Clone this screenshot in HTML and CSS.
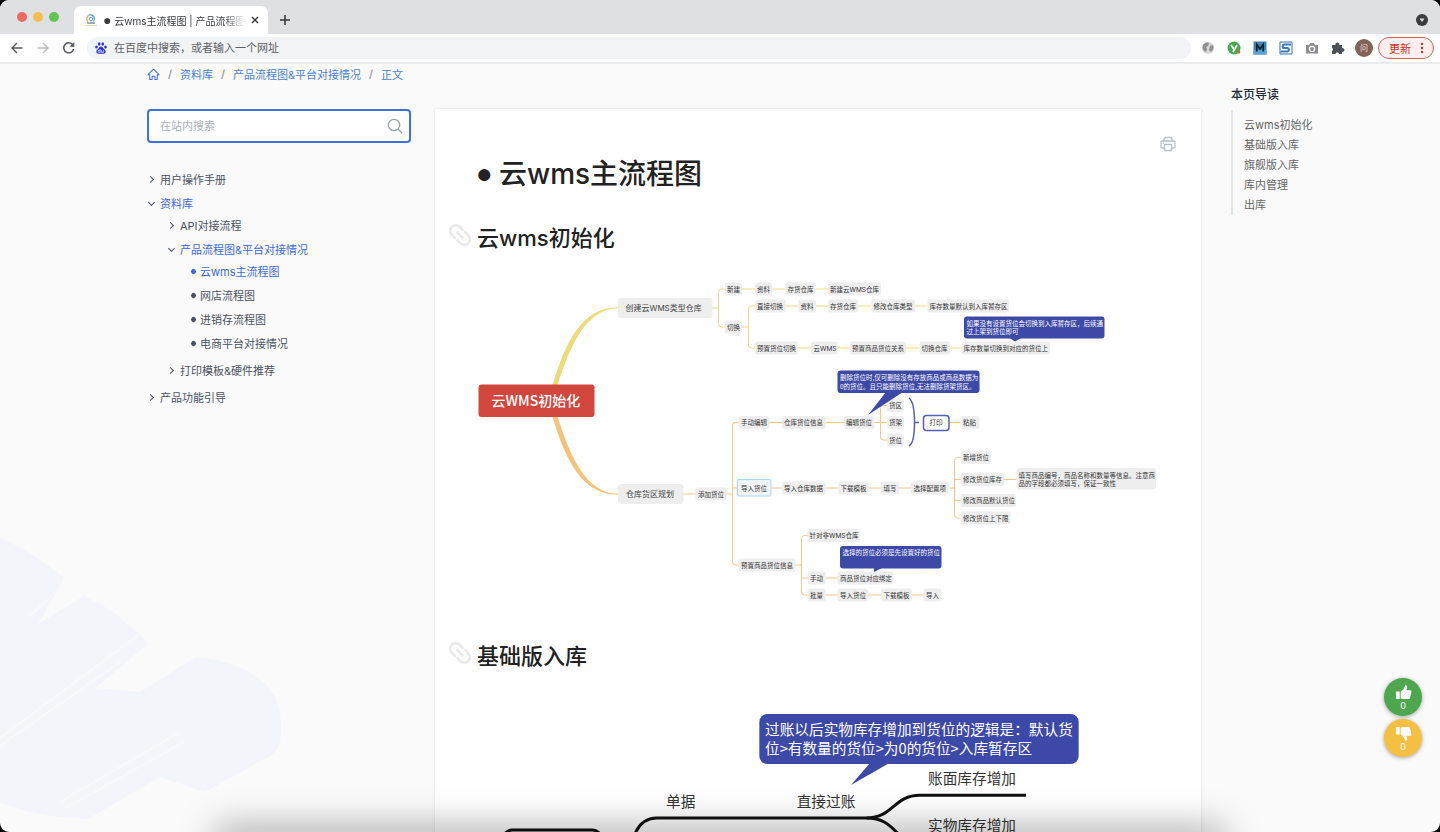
FILE: index.html
```
<!DOCTYPE html>
<html lang="zh-CN">
<head>
    <meta charset="UTF-8">
    <meta name="viewport" content="width=device-width, initial-scale=1.0">
    <title>● 云wms主流程图 | 产品流程图&amp;平台对接情况</title>
    <link rel="stylesheet" href="styles.css">
</head>
<body>
<div class="window">
    <header class="tab-bar">
        <div class="lights"><span class="light red"></span><span class="light yellow"></span><span class="light green"></span></div>
        <div class="tab">
            <svg class="favicon" viewBox="0 0 14 14" fill="none">
                <path d="M4 8.5A4 4 0 0 1 5 2.2" stroke="#e8b84a" stroke-width="1.4"/>
                <path d="M5 2.2A4 4 0 0 1 10.5 6" stroke="#5a9bd8" stroke-width="1.4"/>
                <path d="M10.5 6A3.8 3.8 0 0 1 9 8.5" stroke="#7cc47c" stroke-width="1.4"/>
                <circle cx="7" cy="6" r="1.8" stroke="#5a9bd8"/>
                <path d="M3 10h8" stroke="#7d8fa8" stroke-width="1.4"/>
                <path d="M1 12.500h12" stroke="#e5cfa0" stroke-width=".8"/>
            </svg>
            <span class="tab-title"><span class="dot">●</span> 云wms主流程图 | 产品流程图&amp;</span>
            <button class="icon-btn tab-close" aria-label="关闭"><svg viewBox="0 0 8 8"><path d="M1 1l6 6M7 1L1 7" stroke="#333" stroke-width="1.3"/></svg></button>
        </div>
        <button class="icon-btn tab-new" aria-label="新标签页"><svg viewBox="0 0 10 10"><path d="M5 0v10M0 5h10" stroke="#333" stroke-width="1.5"/></svg></button>
        <button class="icon-btn tab-menu" aria-label="搜索标签页"><svg viewBox="0 0 12 12"><circle cx="6" cy="6" r="6" fill="#3b3c40"/><path d="M3.500 4.500h5L6 8z" fill="#dee0e4"/></svg></button>
    </header>

    <div class="toolbar">
        <button class="icon-btn" aria-label="后退"><svg viewBox="0 0 16 16" fill="none" stroke="#55585d" stroke-width="1.4"><path d="M13.500 8H3M8 3L3 8l5 5"/></svg></button>
        <button class="icon-btn" aria-label="前进"><svg viewBox="0 0 16 16" fill="none" stroke="#bcbec2" stroke-width="1.4"><path d="M2.500 8H13M8 3l5 5-5 5"/></svg></button>
        <button class="icon-btn" aria-label="刷新"><svg viewBox="0 0 16 16" fill="none" stroke="#55585d" stroke-width="1.5"><path d="M12.600 9A5 5 0 1 1 11.500 4.500"/><path d="M13.300 2v4.800H8.500z" fill="#55585d" stroke="none"/></svg></button>
        <label class="omnibox">
            <svg viewBox="0 0 12 12" fill="#2b32d6">
                <ellipse cx="4.200" cy="2" rx="1.300" ry="1.800"/><ellipse cx="7.800" cy="2" rx="1.300" ry="1.800"/>
                <ellipse cx="1.500" cy="5" rx="1.300" ry="1.600"/><ellipse cx="10.500" cy="5" rx="1.300" ry="1.600"/>
                <path d="M6 4.500c1.600 0 2 1.600 3 2.600s2 1.600 1.600 3.200c-.4 1.700-2.300 1.500-4.600 1.500s-4.200.2-4.600-1.500C1 8.700 2 8 3 7.100s1.400-2.600 3-2.600z"/>
                <path d="M5.200 7v3.400H4a1 1 0 0 1 0-2h1.200M6.600 8.200v2.200h2V8.200" fill="none" stroke="#fff" stroke-width=".7"/>
            </svg>
            <input type="text" placeholder="在百度中搜索，或者输入一个网址">
        </label>
        <div class="extensions">
            <svg viewBox="0 0 14 14"><circle cx="7" cy="7" r="6" fill="#d5d5d5"/><path d="M2 4c2-3 5-3 6-2l-1 3-2 1 1 2-1 3C3 10 1 8 2 4zM9 5l3-1c1 3 0 5-2 7L8 9z" fill="#8f8f8f"/></svg>
            <svg viewBox="0 0 14 14"><circle cx="7" cy="7" r="6.500" fill="#3fae49"/><path d="M4 4l2.800 4M10 4L6 11" stroke="#fff" stroke-width="1.800" fill="none"/><circle cx="11.500" cy="11" r="1.800" fill="#e4574a"/></svg>
            <svg viewBox="0 0 14 14"><path d="M.5.5h13v13H.5z" fill="#3c86b8"/><path d="M.5 9h13v4.500H.5z" fill="#56a5d4"/><path d="M3.800 10.500v-7L7 8l3.200-4.500v7" fill="none" stroke="#10202c" stroke-width="1.700"/></svg>
            <svg viewBox="0 0 14 14"><path d="M1 1h12v12H1z" fill="#fff" stroke="#3e6ea8"/><path d="M12 3.500H5.500a1.700 1.700 0 0 0 0 3.500h3a1.800 1.800 0 0 1 0 3.500H1.500" fill="none" stroke="#3e78bd" stroke-width="2.200"/></svg>
            <svg viewBox="0 0 14 14"><path d="M1 4h3l1-2h4l1 2h3v8.500H1z" fill="#8b8d90"/><circle cx="7" cy="8" r="2.600" fill="#8b8d90" stroke="#fff" stroke-width="1.200"/></svg>
            <svg viewBox="0 0 14 14"><path d="M1 4h3.500a2 2 0 1 1 3.800 0H11v3.200a1.900 1.900 0 1 1 0 3.600V13H8a1.800 1.800 0 0 0-3.500 0H1v-3a1.800 1.800 0 0 0 0-3.300z" fill="#4d5055"/></svg>
        </div>
        <span class="avatar">问</span>
        <button class="update">更新 <svg viewBox="0 0 4 12" fill="#c5342c"><circle cx="2" cy="2" r="1.200"/><circle cx="2" cy="6" r="1.200"/><circle cx="2" cy="10" r="1.200"/></svg></button>
    </div>

    <div class="page">
        <svg class="brush" viewBox="0 0 290 300" aria-hidden="true">
            <path d="M0 6C25 16 45 30 64 46L38 92 84 64Q120 80 148 112L95 156 140 160 196 125Q285 135 281 200 282 215 270 224L205 260 160 245 88 287Q35 285 0 270z" fill="#f4f5fb"/>
            <path d="M0 206L140 102M0 214L120 130M60 270L180 200M66 276L184 210M30 84L66 50" stroke="#f8f8fb" stroke-width="2"/>
        </svg>

        <div class="content">
            <nav class="breadcrumb">
                <a href="#" aria-label="首页"><svg viewBox="0 0 14 14" fill="none" stroke="#4a6fe0" stroke-width="1.100" stroke-linejoin="round"><path d="M1 7.200L7 1.300l6 5.900h-2v5.300H8.500V8.800h-3v3.700H3V7.200z"/></svg></a>
                <span>/</span><a href="#">资料库</a>
                <span>/</span><a href="#">产品流程图&amp;平台对接情况</a>
                <span>/</span><a href="#">正文</a>
            </nav>
            <div class="columns">
                <aside class="sidebar">
                    <form class="search">
                        <input type="text" placeholder="在站内搜索" aria-label="在站内搜索">
                        <button type="button" class="icon-btn" aria-label="搜索"><svg viewBox="0 0 16 16" fill="none" stroke="#97a3b0" stroke-width="1.300"><circle cx="7" cy="7" r="5.700"/><path d="M11 11l4 4"/></svg></button>
                    </form>
                    <ul class="menu">
                        <li><a href="#" class="closed">用户操作手册</a></li>
                        <li><a href="#" class="open">资料库</a>
                            <ul>
                                <li><a href="#" class="closed">API对接流程</a></li>
                                <li><a href="#" class="open">产品流程图&amp;平台对接情况</a>
                                    <ul>
                                        <li><a href="#" class="leaf active">云wms主流程图</a></li>
                                        <li><a href="#" class="leaf">网店流程图</a></li>
                                        <li><a href="#" class="leaf">进销存流程图</a></li>
                                        <li><a href="#" class="leaf">电商平台对接情况</a></li>
                                    </ul>
                                </li>
                                <li><a href="#" class="closed">打印模板&amp;硬件推荐</a></li>
                            </ul>
                        </li>
                        <li><a href="#" class="closed">产品功能引导</a></li>
                    </ul>
                </aside>

                <article class="article">
                    <div class="actions">
                        <button class="icon-btn" aria-label="打印"><svg viewBox="0 0 16 16" fill="none" stroke="#b9bfcc" stroke-width="1.300" stroke-linejoin="round"><path d="M4 5V3a1.500 1.500 0 0 1 1.500-1.500h5A1.500 1.500 0 0 1 12 3v2M4 12H2.500A1.500 1.500 0 0 1 1 10.500v-4A1.500 1.500 0 0 1 2.500 5h11A1.500 1.500 0 0 1 15 6.500v4a1.500 1.500 0 0 1-1.500 1.500H12M4.500 8.500h7v6h-7zM3 7h1"/></svg></button>
                    </div>
                    <h1><span class="dot">●</span><span>云wms主流程图</span></h1>
                    <h2><svg class="anchor" viewBox="3 3 18 18"><path transform="rotate(45 12 12)" d="M10.500 7.500H7a4.500 4.500 0 0 0 0 9h3.500M13.500 7.500H17a4.500 4.500 0 0 1 0 9h-3.500M9 12h6"/></svg>云wms初始化</h2>

                    <svg class="map" viewBox="956 556 1396 660">
                        <!-- branches -->
                        <path fill="#ecdb7c" d="M1105 772C1132 684 1164 617 1236 616.500V618.500C1172 620 1142 690 1115 772z"/>
                        <path fill="#f6c17b" d="M1105 836C1132 924 1164 991 1236 991.500V989.500C1172 988 1142 918 1115 836z"/>
                        <g class="line yellow-line">
                            <path d="M1424 618H1437M1450 580H1443Q1437 580 1437 586V650Q1437 656 1443 656H1450"/>
                            <path d="M1484 580H1510M1544 580H1570M1630 580H1656"/>
                            <path d="M1484 656H1497M1510 614H1503Q1497 614 1497 620V692Q1497 698 1503 698H1510"/>
                            <path d="M1570 614H1597M1632 614H1656M1716 614H1742M1830 614H1855"/>
                            <path d="M1596 698H1622M1674 698H1700M1812 698H1838M1900 698H1923"/>
                        </g>
                        <g class="line orange-line">
                            <path d="M1366 990H1392M1452 990H1465M1478 847H1471Q1465 847 1465 853V1126Q1465 1132 1471 1132H1478M1465 978H1474"/>
                            <path d="M1538 847H1564M1650 847H1688M1748 847H1774M1774 813H1767Q1761 813 1761 819V876Q1761 882 1767 882H1774M1898 847H1922"/>
                            <path d="M1542 978H1564M1650 978H1678M1736 978H1762M1798 978H1822M1896 978H1909M1922 917H1915Q1909 917 1909 923V1032Q1909 1038 1915 1038H1922M1909 961H1922M1909 1003H1922M2008 961H2034"/>
                            <path d="M1590 1132H1603M1616 1073H1609Q1603 1073 1603 1079V1186Q1603 1192 1609 1192H1616M1603 1158H1616"/>
                            <path d="M1650 1158H1676M1650 1192H1676M1736 1192H1762M1824 1192H1848"/>
                        </g>
                        <path class="bracket" d="M1818 798Q1829 806 1829 847T1818 894M1829 847h9"/>

                        <!-- main topics -->
                        <rect x="957" y="771" width="232" height="65" rx="6" fill="#d1463d"/>
                        <text class="root" x="983" y="814">云WMS初始化</text>
                        <g class="topic">
                            <rect x="1236" y="598" width="189" height="40" rx="6"/><text x="1251" y="624">创建云WMS类型仓库</text>
                            <rect x="1236" y="970" width="131" height="40" rx="6"/><text x="1252" y="996">仓库货区规划</text>
                        </g>

                        <g class="node">
                            <rect x="1450" y="567" width="34"/><text x="1454" y="585">新建</text>
                            <rect x="1510" y="567" width="34"/><text x="1514" y="585">资料</text>
                            <rect x="1570" y="567" width="61"/><text x="1575" y="585">存货仓库</text>
                            <rect x="1656" y="567" width="106"/><text x="1660" y="585">新建云WMS仓库</text>
                            <rect x="1510" y="601" width="61"/><text x="1514" y="619">直接切换</text>
                            <rect x="1597" y="601" width="35"/><text x="1601" y="619">资料</text>
                            <rect x="1656" y="601" width="60"/><text x="1660" y="619">存货仓库</text>
                            <rect x="1743" y="601" width="87"/><text x="1747" y="619">修改仓库类型</text>
                            <rect x="1855" y="601" width="163"/><text x="1859" y="619">库存数量默认到入库暂存区</text>
                            <rect x="1450" y="643" width="34"/><text x="1454" y="661">切换</text>
                            <rect x="1510" y="685" width="86"/><text x="1514" y="703">预置货位切换</text>
                            <rect x="1622" y="685" width="53"/><text x="1627" y="703">云WMS</text>
                            <rect x="1700" y="685" width="112"/><text x="1704" y="703">预置商品货位关系</text>
                            <rect x="1839" y="685" width="61"/><text x="1843" y="703">切换仓库</text>
                            <rect x="1923" y="685" width="177"/><text x="1927" y="703">库存数量切换到对应的货位上</text>

                            <rect x="1477" y="834" width="62"/><text x="1482" y="852">手动编辑</text>
                            <rect x="1564" y="834" width="87"/><text x="1568" y="852">仓库货位信息</text>
                            <rect x="1688" y="834" width="61"/><text x="1692" y="852">编辑货位</text>
                            <rect x="1774" y="800" width="34"/><text x="1778" y="818">货区</text>
                            <rect x="1774" y="834" width="34"/><text x="1778" y="852">货架</text>
                            <rect x="1774" y="869" width="34"/><text x="1778" y="887">货位</text>
                            <rect x="1921" y="834" width="38"/><text x="1926" y="852">粘贴</text>

                            <rect x="1391" y="977" width="62"/><text x="1396" y="995">添加货位</text>
                            <rect x="1564" y="965" width="87"/><text x="1568" y="983">导入仓库数据</text>
                            <rect x="1677" y="965" width="60"/><text x="1681" y="983">下载模板</text>
                            <rect x="1762" y="965" width="36"/><text x="1767" y="983">填写</text>
                            <rect x="1822" y="965" width="75"/><text x="1827" y="983">选择配置项</text>
                            <rect x="1921" y="904" width="61"/><text x="1926" y="922">新增货位</text>
                            <rect x="1921" y="948" width="87"/><text x="1926" y="966">修改货位库存</text>
                            <rect x="1921" y="990" width="111"/><text x="1926" y="1008">修改商品默认货位</text>
                            <rect x="1921" y="1025" width="100"/><text x="1926" y="1043">修改货位上下限</text>

                            <rect x="1477" y="1119" width="114"/><text x="1482" y="1137">预置商品货位信息</text>
                            <rect x="1615" y="1060" width="105"/><text x="1619" y="1078">针对非WMS仓库</text>
                            <rect x="1615" y="1145" width="36"/><text x="1620" y="1163">手动</text>
                            <rect x="1675" y="1145" width="112"/><text x="1680" y="1163">商品货位对应绑定</text>
                            <rect x="1615" y="1179" width="36"/><text x="1620" y="1197">批量</text>
                            <rect x="1675" y="1179" width="61"/><text x="1680" y="1197">导入货位</text>
                            <rect x="1762" y="1179" width="62"/><text x="1767" y="1197">下载模板</text>
                            <rect x="1847" y="1179" width="36"/><text x="1852" y="1197">导入</text>
                        </g>
                        <g class="note">
                            <rect x="2033" y="938" width="279" height="43" rx="6"/>
                            <text x="2037" y="957">填写商品编号，商品名称和数量等信息。注意商</text>
                            <text x="2037" y="974">品的字段都必须填写，保证一致性</text>
                            <rect class="selected" x="1475" y="961" width="67" height="33" rx="3"/><text x="1482" y="983">导入货位</text>
                            <rect class="boxed" x="1847" y="833" width="51" height="30" rx="6"/><text x="1859" y="852">打印</text>
                        </g>

                        <!-- callouts -->
                        <g class="callout">
                            <path d="M2016 676h30l-16 9z"/>
                            <rect x="1928" y="635" width="281" height="44" rx="6"/>
                            <text x="1933" y="653">如果没有设置货位会切换到入库暂存区，后续通</text>
                            <text x="1933" y="669">过上架到货位即可</text>
                            <path d="M1772 786h34l-70 46z"/>
                            <rect x="1675" y="743" width="284" height="45" rx="6"/>
                            <text x="1680" y="762">删除货位时,仅可删除没有存放商品或商品数据为</text>
                            <text x="1680" y="779">0的货位。且只能删除货位,无法删除货架货区。</text>
                            <path d="M1748 1136h20l-20 10z"/>
                            <rect x="1680" y="1094" width="203" height="45" rx="6"/>
                            <text x="1685" y="1112">选择的货位必须是先设置好的货位</text>
                        </g>
                    </svg>

                    <h2><svg class="anchor" viewBox="3 3 18 18"><path transform="rotate(45 12 12)" d="M10.500 7.500H7a4.500 4.500 0 0 0 0 9h3.500M13.500 7.500H17a4.500 4.500 0 0 1 0 9h-3.500M9 12h6"/></svg>基础版入库</h2>

                    <svg class="map map-basic" viewBox="1434 2100 2094 480">
                        <g class="thick">
                            <path d="M1890 2560Q1905 2457 1970 2457H2600C2680 2457 2680 2389 2760 2389H3078"/>
                            <path d="M2600 2457C2690 2457 2680 2530 2760 2530H3078"/>
                            <rect x="1512" y="2493" width="290" height="130" rx="24"/>
                        </g>
                        <path d="M2612 2290h60l-119 68z" fill="#3d49a6"/>
                        <rect x="2278" y="2145" width="958" height="150" rx="24" fill="#3d49a6"/>
                        <g class="callout-text">
                            <text x="2295" y="2208">过账以后实物库存增加到货位的逻辑是：默认货</text>
                            <text x="2295" y="2265">位&gt;有数量的货位&gt;为0的货位&gt;入库暂存区</text>
                        </g>
                        <g class="label">
                            <text x="1998" y="2425">单据</text>
                            <text x="2390" y="2425">直接过账</text>
                            <text x="2784" y="2356">账面库存增加</text>
                            <text x="2784" y="2495">实物库存增加</text>
                        </g>
                    </svg>
                </article>
            </div>
        </div>

        <nav class="toc">
            <h3>本页导读</h3>
            <ul>
                <li><a href="#">云wms初始化</a></li>
                <li><a href="#">基础版入库</a></li>
                <li><a href="#">旗舰版入库</a></li>
                <li><a href="#">库内管理</a></li>
                <li><a href="#">出库</a></li>
            </ul>
        </nav>
    </div>

    <div class="votes">
        <button class="vote up"><svg viewBox="0 0 18 18" fill="#fff"><path d="M1 8h4v8H1zM6 8l3-2.500L11 1c1.800 0 2.200 1.500 1.600 3.500L12 6.500h4c1.200 0 1.600 1 1.400 2L16 14.500c-.3 1-1 1.500-2 1.500H8l-2-1z"/></svg>0</button>
        <button class="vote down"><svg viewBox="0 0 18 18" fill="#fff"><path d="M1 2h4v8H1zM6 3l2-1h6c1 0 1.700.5 2 1.500l1.400 6c.2 1-.2 2-1.400 2h-4l.6 2C13.200 15.500 12.800 17 11 17l-2-4.500L6 10z"/></svg>0</button>
    </div>
    <div class="bottom-shade"></div>
</div>
</body>
</html>
```

FILE: styles.css
```
* {
    box-sizing: border-box;
}
html {
    background: #000;
}
body {
    margin: 0;
    font-family: Inter, "Noto Sans CJK SC", sans-serif;
    font-size: 11px;
    color: #4a5260;
}
a {
    color: inherit;
    text-decoration: none;
}
ul {
    list-style: none;
    margin: 0;
    padding: 0;
}
svg {
    display: block;
}
input {
    font: inherit;
    border: none;
    outline: none;
    background: none;
    padding: 0;
    min-width: 0;
}
button {
    font: inherit;
    border: none;
    padding: 0;
    cursor: pointer;
}
.icon-btn {
    background: none;
    width: 16px;
    flex: none;
}
.dot {
    font-family: "Liberation Sans", sans-serif;
}

/* browser */
.window {
    display: flex;
    flex-direction: column;
    height: 100vh;
    border-radius: 9px;
    overflow: hidden;
    position: relative;
    background: #fafafa;
}
.tab-bar {
    flex: none;
    display: flex;
    align-items: center;
    height: 34px;
    padding: 0 12px 0 17px;
    background: #dee0e4;
}
.lights {
    display: flex;
    gap: 6px;
    margin-right: 15px;
}
.light {
    width: 10px;
    height: 10px;
    border-radius: 50%;
}
.red { background: #ed6a5e; }
.yellow { background: #f4bf4f; }
.green { background: #61c554; }
.tab {
    align-self: flex-end;
    display: flex;
    align-items: center;
    width: 194px;
    height: 28px;
    padding: 0 9px 0 10px;
    border-radius: 7px 7px 0 0;
    background: #fff;
}
.favicon {
    width: 14px;
    flex: none;
    margin-right: 5px;
}
.tab-title {
    flex: 1;
    overflow: hidden;
    white-space: nowrap;
    font-size: 10px;
    color: #3a3c40;
    -webkit-mask-image: linear-gradient(90deg, #000 85%, transparent);
    mask-image: linear-gradient(90deg, #000 85%, transparent);
}
.tab-title .dot {
    font-size: 14px;
    line-height: 10px;
}
.tab-close {
    width: 8px;
    margin-left: 6px;
}
.tab-new {
    width: 10px;
    margin: 6px 0 0 12px;
}
.tab-menu {
    width: 12px;
    margin: 6px 0 0 auto;
}
.toolbar {
    flex: none;
    display: flex;
    align-items: center;
    gap: 10px;
    height: 30px;
    padding: 0 6px 0 9px;
    background: #fff;
    border-bottom: 2px solid #ebecee;
}
.omnibox {
    flex: 1;
    display: flex;
    align-items: center;
    gap: 7px;
    height: 22px;
    padding: 0 8px;
    border-radius: 11px;
    background: #f1f3f4;
}
.omnibox svg {
    width: 12px;
}
.omnibox input {
    flex: 1;
}
.omnibox input::placeholder {
    color: #5d6065;
}
.extensions {
    display: flex;
    gap: 12px;
}
.extensions svg {
    width: 14px;
}
.avatar {
    width: 18px;
    height: 18px;
    border-radius: 50%;
    background: #836358;
    color: #e8dcd8;
    font-size: 8px;
    line-height: 18px;
    text-align: center;
}
.update {
    display: flex;
    align-items: center;
    justify-content: space-between;
    width: 56px;
    height: 22px;
    margin-left: -5px;
    padding: 0 9px 0 10px;
    border: 1px solid #d9605a;
    border-radius: 11px;
    background: #fcefee;
    color: #c5342c;
}
.update svg {
    width: 4px;
}

/* page */
.page {
    flex: 1;
    min-height: 0;
    display: flex;
    gap: 30px;
    padding-left: 147px;
    overflow: hidden;
    position: relative;
}
.brush {
    position: absolute;
    left: 0;
    bottom: 0;
    width: 290px;
}
.content {
    flex: 1;
    min-width: 0;
    position: relative;
}
.breadcrumb {
    display: flex;
    align-items: center;
    gap: 7px;
    height: 20px;
    margin-bottom: 25px;
    color: #7a808a;
}
.breadcrumb a {
    color: #4a7fd6;
}
.breadcrumb svg {
    width: 13px;
}
.breadcrumb span {
    padding: 0 1px;
}
.columns {
    display: flex;
    gap: 24px;
    align-items: flex-start;
}
.sidebar {
    flex: none;
    width: 264px;
}
.search {
    display: flex;
    align-items: center;
    height: 34px;
    padding: 0 6px 0 11px;
    border: 2px solid #3f70dc;
    border-radius: 4px;
    background: #fff;
}
.search input {
    flex: 1;
}
.search input::placeholder {
    color: #a9b1ba;
}
.menu {
    margin-top: 24px;
}
.menu ul {
    margin: -2px 0 3px;
    padding-left: 20px;
}
.menu a {
    display: flex;
    align-items: center;
    height: 24px;
}
.menu a::before {
    content: "";
    width: 4px;
    height: 4px;
    margin: 0 7px 0 1px;
    border: solid #4a5260;
    border-width: 1px 1px 0 0;
    transform: rotate(45deg);
}
.menu a.open::before {
    transform: rotate(135deg);
    margin: 0 6px 2px 2px;
}
.menu a.leaf::before {
    width: 5px;
    height: 5px;
    margin: 0 4px 0 4px;
    border: none;
    border-radius: 50%;
    background: #4a5260;
}
.menu a.open,
.menu a.active {
    color: #3c68dc;
}
.menu a.active::before {
    background: #3c68dc;
}

.article {
    flex: 1;
    min-width: 0;
    padding: 27px 25px 0 43px;
    background: #fff;
    box-shadow: 0 0 3px rgba(0, 0, 0, 0.12);
    color: #222;
}
.actions {
    display: flex;
    justify-content: flex-end;
}
h1, h2, h3 {
    margin: 0;
    font-weight: 500;
}
h1 {
    display: flex;
    gap: 6px;
    margin: 2px 0 0 -2px;
    font-size: 28px;
    line-height: 40px;
}
h2 {
    display: flex;
    align-items: center;
    gap: 6px;
    margin: 28px 0 23px -29px;
    font-size: 22px;
    line-height: 32px;
}
.anchor {
    width: 22px;
    margin-bottom: 6px;
    fill: none;
    stroke: #e9e9e9;
    stroke-width: 2;
    stroke-linecap: round;
}
.map {
    width: 100%;
    margin-bottom: 33px;
}
.map-basic {
    margin-top: 27px;
}
.map text {
    font-family: "Noto Sans CJK SC", sans-serif;
}
.map .topic text,
.map .node text {
    font-family: Inter, "Noto Sans CJK SC", sans-serif;
}
.line,
.bracket {
    fill: none;
    stroke-width: 2;
}
.yellow-line { stroke: #eedc85; }
.orange-line { stroke: #f6c68a; }
.bracket { stroke: #5560b5; stroke-width: 3; }
.root {
    font-size: 28px;
    font-weight: 500;
    fill: #fff;
}
.topic rect,
.node rect,
.note rect {
    fill: #eee;
}
.topic text {
    font-size: 16px;
    fill: #444;
}
.node rect {
    height: 26px;
    rx: 5px;
}
.node text,
.note text,
.callout text {
    font-size: 13px;
    fill: #333;
}
.note .selected {
    fill: #f1f4f7;
    stroke: #a9d8f5;
    stroke-width: 2;
}
.note .boxed {
    fill: #fff;
    stroke: #5560b5;
    stroke-width: 3;
}
.callout {
    fill: #3d49a6;
}
.callout text {
    fill: #fff;
}
.thick {
    fill: none;
    stroke: #111;
    stroke-width: 9;
}
.callout-text,
.label {
    font-size: 44px;
    fill: #333;
}
.callout-text {
    fill: #fff;
}

.toc {
    flex: none;
    width: 209px;
    padding-top: 22px;
}
.toc h3 {
    margin-bottom: 6px;
    font-size: 12px;
    line-height: 18px;
    color: #252b36;
}
.toc ul {
    padding: 5px 0 0 11px;
    border-left: 2px solid #e3e4e6;
    color: #666;
}
.toc li {
    line-height: 20px;
}

.votes {
    position: absolute;
    right: 18px;
    bottom: 75px;
    display: flex;
    flex-direction: column;
    gap: 3px;
}
.vote {
    display: flex;
    flex-direction: column;
    align-items: center;
    justify-content: center;
    width: 38px;
    height: 38px;
    border-radius: 50%;
    color: #fff;
    font-size: 9px;
    line-height: 10px;
    box-shadow: 0 1px 4px rgba(0, 0, 0, 0.35);
}
.vote svg {
    width: 17px;
}
.up { background: #4ea64f; }
.down { background: #f5bf42; }
/* shade that the dock casts over the bottom of the window */
.bottom-shade {
    position: absolute;
    left: 220px;
    right: 220px;
    top: 100%;
    height: 20px;
    box-shadow: 0 0 36px 4px rgba(0, 0, 0, 0.36);
    pointer-events: none;
}
```
